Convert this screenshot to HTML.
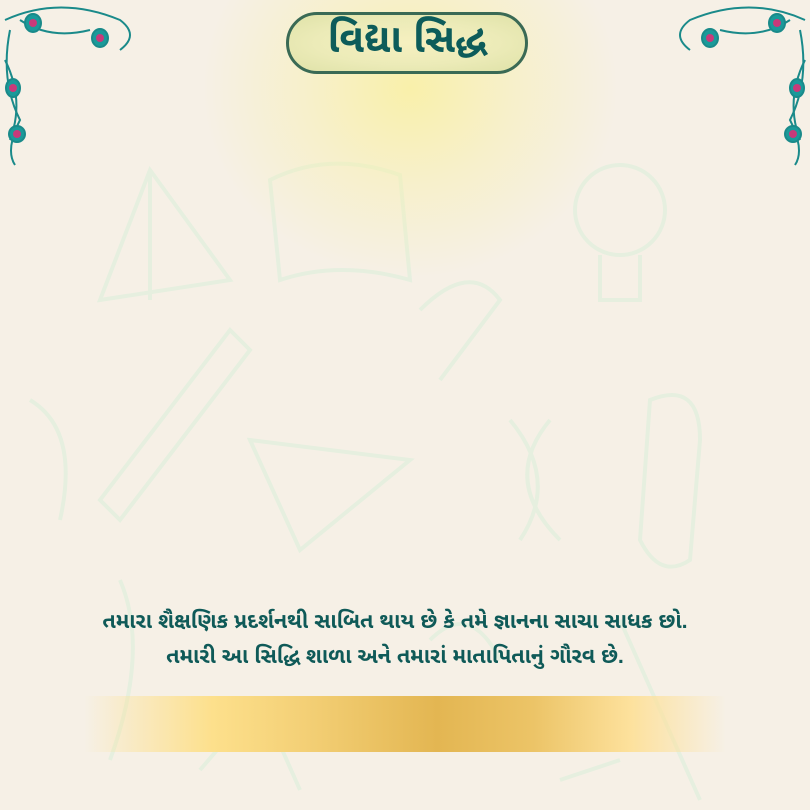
<!DOCTYPE html>
<html><head><meta charset="utf-8"><style>
html,body{margin:0;padding:0}
body{width:810px;height:810px;position:relative;overflow:hidden;background:#f6f0e6;font-family:"Liberation Sans","Noto Sans Gujarati","Noto Sans CJK SC",sans-serif}
.glow{position:absolute;left:200px;top:-40px;width:420px;height:320px;background:radial-gradient(ellipse at 50% 40%,rgba(250,240,150,0.75) 0%,rgba(248,240,170,0.45) 35%,rgba(246,240,230,0) 70%)}
.pill{position:absolute;left:286px;top:12px;width:236px;height:56px;border:3px solid #3a6a55;border-radius:32px;background:radial-gradient(ellipse at 50% 50%,#f6f0c0 0%,#ecebb8 55%,#dfe2a8 100%);display:flex;align-items:center;justify-content:center;color:#0d5c5a;font-size:40px;font-weight:bold}
.txt{position:absolute;left:-10px;width:810px;text-align:center;color:#0f5a58;font-size:21.5px;font-weight:bold;white-space:nowrap;line-height:28px}
.bar{position:absolute;left:84px;top:696px;width:642px;height:56px;background:linear-gradient(90deg,rgba(253,224,140,0) 0%,#fde08c 20%,#f3cf75 35%,#e3b652 55%,#ecc467 70%,#fde19c 85%,rgba(253,230,170,0) 100%)}
svg.bg{position:absolute;left:0;top:0}
</style></head><body>
<svg class="bg" width="810" height="810" fill="none" stroke="#dcefdc" stroke-width="4" opacity="0.6">
<path d="M100 300 L150 170 L230 280 Z M150 170 L150 300"/>
<path d="M270 180 Q330 150 400 175 L410 280 Q340 260 280 280 Z"/>
<circle cx="620" cy="210" r="45"/><path d="M600 255 L600 300 L640 300 L640 255"/>
<path d="M250 440 L410 460 L300 550 Z"/>
<path d="M100 500 L230 330 L250 350 L120 520 Z"/>
<path d="M420 310 Q470 260 500 300 L440 380"/>
<path d="M650 400 Q700 380 700 440 L690 560 Q660 580 640 540 Z"/>
<path d="M510 420 Q560 480 520 540 M550 420 Q500 480 560 540"/>
<path d="M30 400 Q80 430 60 520"/>
<path d="M120 580 Q150 650 110 760 M200 770 L260 700 L300 790 M430 640 Q470 600 500 660 M620 620 L700 800 M560 780 L620 760"/>
</svg>
<div class="glow"></div>
<svg style="position:absolute;left:0;top:0" width="150" height="170" fill="none" stroke="#1a8a8a" stroke-width="2">
<path d="M5 20 Q60 -5 120 20 Q140 35 120 50"/><path d="M10 30 Q0 80 20 120 Q5 150 15 165"/>
<path d="M20 20 Q50 40 90 30"/><path d="M5 60 Q25 100 10 140"/>
<ellipse cx="33" cy="23" rx="8" ry="9" fill="#1a9a9a"/><circle cx="33" cy="23" r="4" fill="#c83a7a" stroke="none"/>
<ellipse cx="100" cy="38" rx="8" ry="9" fill="#1a9a9a"/><circle cx="100" cy="38" r="4" fill="#c83a7a" stroke="none"/>
<ellipse cx="13" cy="88" rx="7" ry="9" fill="#1a9a9a"/><circle cx="13" cy="88" r="4" fill="#c83a7a" stroke="none"/>
<ellipse cx="17" cy="134" rx="8" ry="8" fill="#1a9a9a"/><circle cx="17" cy="134" r="4" fill="#c83a7a" stroke="none"/>
</svg>
<svg style="position:absolute;right:0;top:0;transform:scaleX(-1)" width="150" height="170" fill="none" stroke="#1a8a8a" stroke-width="2">
<path d="M5 20 Q60 -5 120 20 Q140 35 120 50"/><path d="M10 30 Q0 80 20 120 Q5 150 15 165"/>
<path d="M20 20 Q50 40 90 30"/><path d="M5 60 Q25 100 10 140"/>
<ellipse cx="33" cy="23" rx="8" ry="9" fill="#1a9a9a"/><circle cx="33" cy="23" r="4" fill="#c83a7a" stroke="none"/>
<ellipse cx="100" cy="38" rx="8" ry="9" fill="#1a9a9a"/><circle cx="100" cy="38" r="4" fill="#c83a7a" stroke="none"/>
<ellipse cx="13" cy="88" rx="7" ry="9" fill="#1a9a9a"/><circle cx="13" cy="88" r="4" fill="#c83a7a" stroke="none"/>
<ellipse cx="17" cy="134" rx="8" ry="8" fill="#1a9a9a"/><circle cx="17" cy="134" r="4" fill="#c83a7a" stroke="none"/>
</svg>
<div class="pill">વિદ્યા સિદ્ધ</div>
<div class="txt" style="top:607px">તમારા શૈક્ષણિક પ્રદર્શનથી સાબિત થાય છે કે તમે જ્ઞાનના સાચા સાધક છો.</div>
<div class="txt" style="top:642px">તમારી આ સિદ્ધિ શાળા અને તમારાં માતાપિતાનું ગૌરવ છે.</div>
<div class="bar"></div>
</body></html>
